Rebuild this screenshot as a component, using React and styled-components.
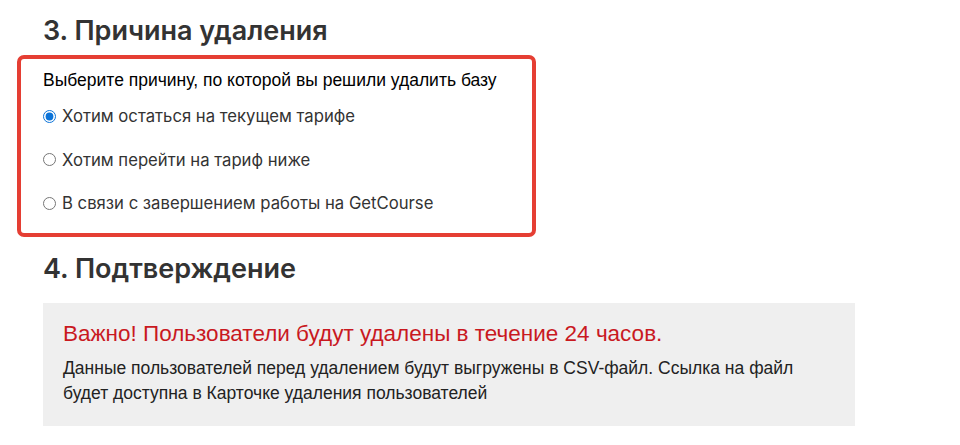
import styled, { createGlobalStyle } from "styled-components"

const Global = createGlobalStyle`
  body {
    margin: 0;
    background: #fff;
    font-family: "Liberation Sans", Arial, sans-serif;
  }
`
const Page = styled.div`
  padding: 12px 0 0 43px;
  width: 812px;
`
const Heading = styled.h2`
  margin: 0;
  font-family: Inter, "Open Sans", sans-serif;
  font-weight: 600;
  font-size: 27px;
  line-height: 38px;
  color: #333;
`
const ReasonBox = styled.div`
  margin: 5px 0 0 -26px;
  width: 519px;
  box-sizing: border-box;
  border: 4px solid #e53e33;
  border-radius: 7px;
  padding: 12px 0 18px 22px;
`
const Prompt = styled.p`
  margin: 0 0 15px;
  font-size: 17.5px;
  line-height: 18px;
  color: #000;
`
const Options = styled.div`
  display: flex;
  flex-direction: column;
  gap: 19.5px;
`
const Option = styled.label`
  display: flex;
  align-items: center;
  gap: 6px;
  font-family: Inter, "Open Sans", sans-serif;
  font-size: 16.7px;
  line-height: 24px;
  color: #333;
`
const Radio = styled.input`
  margin: 0;
  width: 13px;
  height: 13px;
  accent-color: #0b73d8;
`
const ConfirmHeading = styled(Heading)`
  margin-top: 13px;
`
const Notice = styled.div`
  margin-top: 15px;
  background: #efefef;
  padding: 17px 20px 0;
  height: 123px;
  box-sizing: border-box;
`
const Warning = styled.p`
  margin: 0 0 8px;
  font-size: 22.5px;
  line-height: 28px;
  color: #c9191f;
`
const NoticeText = styled.p`
  margin: 0;
  font-size: 17.5px;
  line-height: 25px;
  color: #222;
`

const reasons = [
  "Хотим остаться на текущем тарифе",
  "Хотим перейти на тариф ниже",
  "В связи с завершением работы на GetCourse",
]

export default function App() {
  return (
    <Page>
      <Global />
      <Heading>3. Причина удаления</Heading>
      <ReasonBox>
        <Prompt>Выберите причину, по которой вы решили удалить базу</Prompt>
        <Options>
          {reasons.map((r, i) => (
            <Option key={r}>
              <Radio type="radio" name="reason" defaultChecked={i === 0} />
              {r}
            </Option>
          ))}
        </Options>
      </ReasonBox>
      <ConfirmHeading>4. Подтверждение</ConfirmHeading>
      <Notice>
        <Warning>Важно! Пользователи будут удалены в течение 24 часов.</Warning>
        <NoticeText>
          Данные пользователей перед удалением будут выгружены в CSV-файл. Ссылка на файл
          будет доступна в Карточке удаления пользователей
        </NoticeText>
      </Notice>
    </Page>
  )
}
